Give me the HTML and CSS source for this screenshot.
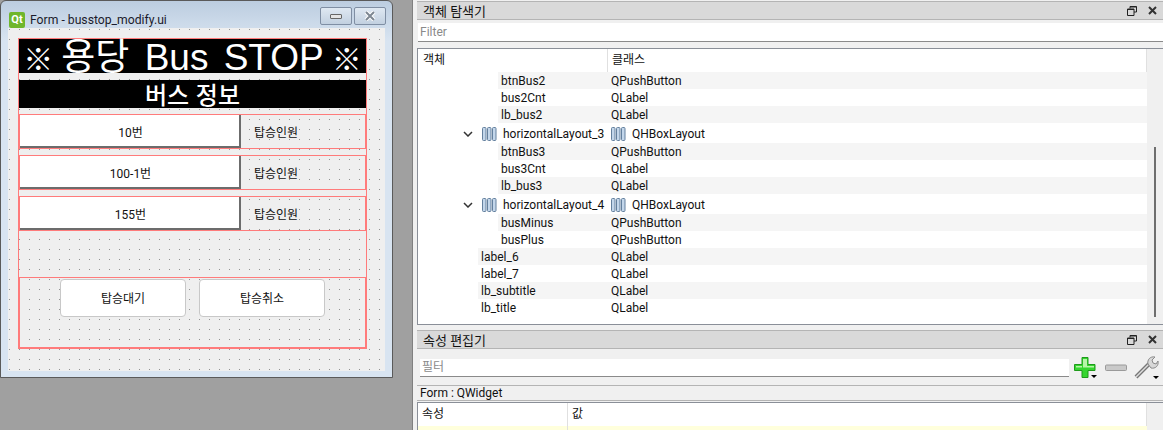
FILE: index.html
```html
<!DOCTYPE html>
<html lang="ko">
<head>
    <meta charset="UTF-8">
    <title>Form - busstop_modify.ui</title>
    <link rel="stylesheet" href="styles.css">
</head>
<body>
<svg class="defs" width="0" height="0">
    <symbol id="hbox" viewBox="0 0 15 14">
        <rect x=".5" y=".5" width="3.500" height="13" rx="1" fill="#c3d6ea" stroke="#64809e"/>
        <rect x="5.500" y=".5" width="3.500" height="13" rx="1" fill="#c3d6ea" stroke="#64809e"/>
        <rect x="10.500" y=".5" width="3.500" height="13" rx="1" fill="#c3d6ea" stroke="#64809e"/>
    </symbol>
    <symbol id="chev" viewBox="0 0 10 6">
        <path d="M1 1l4 4 4-4" fill="none" stroke="#333" stroke-width="1.500"/>
    </symbol>
    <symbol id="float" viewBox="0 0 10 10">
        <path d="M3 2.500V.5h6.500v5.500H7M.5 3h6.500v6.500H.5z" fill="none" stroke="#222"/>
        <path d="M3 1h6.500M.5 3.500h6.500" stroke="#222"/>
    </symbol>
    <symbol id="close" viewBox="0 0 9 9">
        <path d="M1 1l7 7M8 1l-7 7" stroke="#333" stroke-width="2"/>
    </symbol>
</svg>

<div class="app">
    <div class="mdi">
        <div class="win">
            <div class="titlebar">
                <span class="qt">Qt</span>
                <span class="win-title">Form - busstop_modify.ui</span>
                <span class="win-btn"><i class="min-glyph"></i></span>
                <span class="win-btn"><svg width="12" height="10" viewBox="0 0 12 10"><path d="M2 1l8 8M10 1l-8 8" stroke="#fff" stroke-width="4"/><path d="M2 1l8 8M10 1l-8 8" stroke="#7d8792" stroke-width="2"/></svg></span>
            </div>
            <div class="form">
                <div class="outer">
                    <div class="lb-title"><span class="mark">※</span><span class="title-text">용당 Bus STOP</span><span class="mark">※</span></div>
                    <div class="lb-sub">버스 정보</div>
                    <div class="bus-row">
                        <div class="bus-btn">10번</div>
                        <div class="bus-cnt">탑승인원</div>
                    </div>
                    <div class="bus-row">
                        <div class="bus-btn">100-1번</div>
                        <div class="bus-cnt">탑승인원</div>
                    </div>
                    <div class="bus-row">
                        <div class="bus-btn">155번</div>
                        <div class="bus-cnt">탑승인원</div>
                    </div>
                    <div class="spacer"></div>
                    <div class="bottom">
                        <div class="act-btn">탑승대기</div>
                        <div class="act-btn">탑승취소</div>
                    </div>
                </div>
            </div>
        </div>
    </div>

    <div class="side">
        <div class="dock-title">
            <span>객체 탐색기</span>
            <svg class="dock-ic" width="10" height="10"><use href="#float"/></svg>
            <svg class="dock-ic" width="9" height="9"><use href="#close"/></svg>
        </div>
        <div class="filter-top">Filter</div>
        <div class="tree">
            <div class="tree-main">
                <div class="tree-head">
                    <div class="head-a">객체</div>
                    <div class="head-b">클래스</div>
                </div>
                <div class="row d2 alt"><span class="name">btnBus2</span><span>QPushButton</span></div>
                <div class="row d2"><span class="name">bus2Cnt</span><span>QLabel</span></div>
                <div class="row d2 alt"><span class="name">lb_bus2</span><span>QLabel</span></div>
                <div class="row lay">
                    <svg class="chev" width="10" height="6"><use href="#chev"/></svg>
                    <svg class="hb" width="15" height="14"><use href="#hbox"/></svg>
                    <span class="name">horizontalLayout_3</span>
                    <svg class="hb2" width="15" height="14"><use href="#hbox"/></svg>
                    <span>QHBoxLayout</span>
                </div>
                <div class="row d2 alt"><span class="name">btnBus3</span><span>QPushButton</span></div>
                <div class="row d2"><span class="name">bus3Cnt</span><span>QLabel</span></div>
                <div class="row d2 alt"><span class="name">lb_bus3</span><span>QLabel</span></div>
                <div class="row lay">
                    <svg class="chev" width="10" height="6"><use href="#chev"/></svg>
                    <svg class="hb" width="15" height="14"><use href="#hbox"/></svg>
                    <span class="name">horizontalLayout_4</span>
                    <svg class="hb2" width="15" height="14"><use href="#hbox"/></svg>
                    <span>QHBoxLayout</span>
                </div>
                <div class="row d2 alt"><span class="name">busMinus</span><span>QPushButton</span></div>
                <div class="row d2"><span class="name">busPlus</span><span>QPushButton</span></div>
                <div class="row d1 alt"><span class="name">label_6</span><span>QLabel</span></div>
                <div class="row d1"><span class="name">label_7</span><span>QLabel</span></div>
                <div class="row d1 alt"><span class="name">lb_subtitle</span><span>QLabel</span></div>
                <div class="row d1"><span class="name">lb_title</span><span>QLabel</span></div>
            </div>
            <div class="scroll"><div class="thumb"></div></div>
        </div>

        <div class="dock-title second">
            <span>속성 편집기</span>
            <svg class="dock-ic" width="10" height="10"><use href="#float"/></svg>
            <svg class="dock-ic" width="9" height="9"><use href="#close"/></svg>
        </div>
        <div class="prop-tools">
            <div class="filter-prop">필터</div>
            <svg class="tool" width="24" height="22" viewBox="0 0 24 22">
                <path d="M9 .5h6v7h7v6h-7v7H9v-7H1.500v-6H9z" fill="#35d62f" stroke="#1f9a1b"/>
                <path d="M10 2h4v7h7v1.500H10zM3 9h6v1.500H3z" fill="#b6f5a8"/>
                <path d="M18 18h6l-3 3z" fill="#000"/>
            </svg>
            <svg class="tool minus" width="22" height="8" viewBox="0 0 22 8">
                <rect x=".5" y="1" width="21" height="5.500" rx="1" fill="#c9c9c9" stroke="#9a9a9a"/>
            </svg>
            <svg class="tool" width="26" height="26" viewBox="0 0 26 26">
                <path d="M3 22L17 8" stroke="#777" stroke-width="4"/>
                <path d="M3 22L17 8" stroke="#ddd" stroke-width="1.500"/>
                <path d="M15 9c-1-4 2-8 7-7l-3 3 1 3 3 1 2-3c1 5-3 8-7 7z" fill="#d8d8d8" stroke="#8a8a8a"/>
                <path d="M20 21h6l-3 3z" fill="#000"/>
            </svg>
        </div>
        <div class="form-label">Form : QWidget</div>
        <div class="tree prop-tree">
            <div class="tree-main">
                <div class="tree-head prop-head">
                    <div class="head-p">속성</div>
                    <div class="head-v">값</div>
                </div>
                <div class="prop-row"><div class="prop-key"></div></div>
            </div>
            <div class="scroll"></div>
        </div>
    </div>
</div>
</body>
</html>
```

FILE: styles.css
```css
html, body {
    margin: 0;
    padding: 0;
}

body {
    width: 1163px;
    height: 430px;
    overflow: hidden;
    font-family: Roboto, "Noto Sans CJK KR", sans-serif;
    font-size: 12px;
    color: #111;
}

.defs {
    display: block;
    height: 0;
}

.app {
    display: flex;
    height: 430px;
}

/* left: mdi area with the form window */
.mdi {
    flex: none;
    width: 413px;
    box-sizing: border-box;
    background-color: #a0a0a0;
    border-right: 1px solid #808080;
}

.win {
    width: 393px;
    height: 378px;
    box-sizing: border-box;
    border: 1px solid #5a5a5a;
    border-radius: 6px 6px 0 0;
    background: linear-gradient(#bccde0 0, #d8e4f1 40px);
    padding: 0 7px 7px 7px;
}

.titlebar {
    display: flex;
    align-items: flex-start;
    height: 27px;
}

.qt {
    width: 16px;
    height: 16px;
    margin: 11px 5px 0 1px;
    background-color: #6fb62c;
    border-radius: 2px;
    color: #fff;
    font-weight: bold;
    font-size: 11px;
    line-height: 16px;
    text-align: center;
}

.win-title {
    flex: 1;
    margin-top: 11px;
    font-size: 12.200px;
    line-height: 16px;
    color: #1b1b2c;
}

.win-btn {
    display: flex;
    align-items: center;
    justify-content: center;
    width: 32px;
    height: 18px;
    box-sizing: border-box;
    margin: 6px 0 0 2px;
    border: 1px solid #7f8ea3;
    border-radius: 2px;
    background: linear-gradient(#dfe8f2, #c2d0e0);
}

.win-btn:last-child {
    margin-right: -1px;
}

.min-glyph {
    display: block;
    width: 10px;
    height: 3px;
    background-color: #e4e4e4;
    border: 1px solid #666;
    border-radius: 1px;
}

.form {
    height: 343px;
    background-color: #efefef;
    background-image: radial-gradient(circle at 1.500px 1.500px, #929292 0.8px, transparent 0.9px);
    background-size: 10px 10px;
    padding: 10px 0 0 10px;
    box-sizing: border-box;
}

.outer {
    width: 349px;
    height: 311px;
    box-sizing: border-box;
    border: 1px solid #ff7b7b;
    display: flex;
    flex-direction: column;
}

.lb-title {
    display: flex;
    align-items: center;
    justify-content: center;
    gap: 8px;
    height: 34px;
    flex: none;
    box-sizing: border-box;
    padding-top: 3px;
    background-color: #000;
    color: #fff;
    font-family: "Liberation Sans", "Noto Sans CJK KR", sans-serif;
    font-size: 37px;
    line-height: 31px;
    white-space: nowrap;
}

.title-text {
    word-spacing: 5px;
}

.mark {
    font-size: 30px;
    font-weight: 500;
    font-family: "Noto Sans CJK KR", sans-serif;
}

.lb-sub {
    height: 28px;
    flex: none;
    margin-top: 7px;
    background-color: #000;
    color: #fff;
    font-family: "Noto Sans CJK KR", sans-serif;
    font-size: 24px;
    font-weight: 500;
    line-height: 27px;
    text-align: center;
}

.bus-row {
    display: flex;
    height: 35px;
    flex: none;
    box-sizing: border-box;
    margin-top: 6px;
    border: 1px solid #ff7b7b;
}

.bus-btn {
    width: 221px;
    box-sizing: border-box;
    height: 33px;
    padding-left: 2px;
    background-color: #fff;
    border-right: 2px solid #6c6c6c;
    border-bottom: 2px solid #6c6c6c;
    text-align: center;
    line-height: 36px;
}

.bus-cnt {
    padding-left: 13px;
    line-height: 36px;
}

.spacer {
    height: 46px;
    flex: none;
}

.bottom {
    flex: 1;
    display: flex;
    gap: 13px;
    padding: 1px 0 0 40px;
    border: 2px solid #ff7b7b;
    border-top: 1px solid #ff7b7b;
    margin: 0 -1px -1px -1px;
}

.act-btn {
    width: 126px;
    height: 38px;
    box-sizing: border-box;
    background-color: #fff;
    border: 1px solid #c8c8c8;
    border-radius: 4px;
    text-align: center;
    line-height: 38px;
}

/* right: dock panels */
.side {
    flex: 1;
    min-width: 0;
    background-color: #f0f0f0;
    display: flex;
    flex-direction: column;
    padding: 1px 0 0 4px;
}

.side > * {
    flex: none;
}

.dock-title {
    display: flex;
    align-items: center;
    gap: 11px;
    height: 19px;
    box-sizing: border-box;
    background-color: #d9d9d9;
    border-top: 1px solid #b4b4b4;
    border-bottom: 1px solid #b4b4b4;
    padding: 0 6px 0 6px;
}

.dock-title span {
    flex: 1;
    font-size: 13px;
}

.dock-title.second {
    margin-top: 5px;
}

.filter-top {
    height: 19px;
    margin: 3px 0 0 1px;
    background-color: #fff;
    border-bottom: 1px solid #8a8a8a;
    color: #8a8a8a;
    padding-left: 2px;
    line-height: 18px;
    box-sizing: border-box;
}

.tree {
    display: flex;
    height: 277px;
    box-sizing: border-box;
    margin-top: 6px;
    border: 1px solid #8a8f98;
    border-right: 0;
    background-color: #fff;
}

.tree-main {
    flex: 1;
    min-width: 0;
}

.tree-head {
    display: flex;
    height: 23px;
    line-height: 22px;
}

.head-a {
    width: 190px;
    box-sizing: border-box;
    padding-left: 5px;
    border-right: 1px solid #e0e0e0;
}

.head-b {
    flex: 1;
    padding-left: 4px;
    border-right: 1px solid #e0e0e0;
}

.row {
    display: flex;
    align-items: center;
    height: 17px;
    box-sizing: border-box;
    padding-top: 2px;
    line-height: 15px;
}

.row.alt {
    background-color: #f5f5f5;
}

.row.d2 {
    margin-left: 80px;
    padding-left: 3px;
}

.row.d2 .name {
    width: 110px;
    flex: none;
}

.row.d1 {
    margin-left: 60px;
    padding-left: 3px;
}

.row.d1 .name {
    width: 130px;
    flex: none;
}

.row.lay {
    height: 20px;
}

.chev {
    margin-left: 45px;
    flex: none;
}

.hb {
    margin-left: 9px;
    flex: none;
}

.row.lay .name {
    margin-left: 6px;
    width: 104px;
    flex: none;
    white-space: nowrap;
}

.hb2 {
    margin: 0 6px 0 4px;
    flex: none;
}

.scroll {
    width: 16px;
    flex: none;
    background-color: #f0f0f0;
    position: relative;
}

.thumb {
    position: absolute;
    left: 7px;
    top: 98px;
    width: 2px;
    height: 170px;
    background-color: #6e6e6e;
}

.prop-tools {
    display: flex;
    align-items: center;
    height: 36px;
    box-sizing: border-box;
    padding: 2px 0 0 3px;
}

.filter-prop {
    width: 649px;
    height: 18px;
    box-sizing: border-box;
    background-color: #fff;
    border-bottom: 1px solid #8a8a8a;
    color: #8a8a8a;
    padding-left: 2px;
    line-height: 17px;
    margin-right: 4px;
}

.tool {
    flex: none;
}

.tool.minus {
    margin: 0 6px 0 8px;
}

.form-label {
    height: 16px;
    box-sizing: border-box;
    margin-bottom: 1px;
    border-top: 1px solid #b4b4b4;
    border-bottom: 1px solid #b4b4b4;
    padding-left: 3px;
    line-height: 14px;
}

.side > .prop-tree {
    flex: 1;
    height: auto;
    min-height: 0;
    margin-top: 0;
    border-bottom: 0;
}

.prop-head {
    height: 23px;
}

.head-p {
    width: 150px;
    box-sizing: border-box;
    padding-left: 4px;
    border-right: 1px solid #e0e0e0;
}

.head-v {
    flex: 1;
    padding-left: 4px;
    border-right: 1px solid #e0e0e0;
}

.prop-row {
    height: 4px;
    background-color: #ffffdc;
}

.prop-key {
    width: 150px;
    height: 4px;
    box-sizing: border-box;
    border-right: 1px solid #e0e0e0;
}
```
